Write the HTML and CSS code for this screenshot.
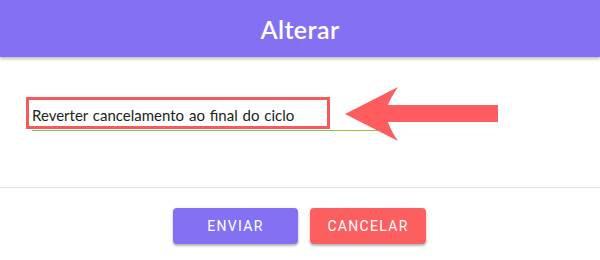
FILE: index.html
```html
<!DOCTYPE html>
<html lang="pt">
<head>
<meta charset="utf-8">
<link rel="stylesheet" href="styles.css">
</head>
<body>
<div class="dialog">
  <header class="header">Alterar</header>
  <section class="content">
    <div class="field">
      <div class="field-text">Reverter cancelamento ao final do ciclo</div>
    </div>
    <div class="highlight"></div>
    <svg class="arrow" viewBox="0 0 156 56" width="156" height="56">
      <path d="M1 28 L54 1 Q47 11 44 19 L154 19 L154 36 L44 36 Q47 45 54 55 Z" fill="#fe5c5e"/>
    </svg>
  </section>
  <footer class="actions">
    <button class="btn btn-send">ENVIAR</button>
    <button class="btn btn-cancel">CANCELAR</button>
  </footer>
</div>
</body>
</html>
```
FILE: styles.css
```css
html, body {
  margin: 0;
  padding: 0;
  background: #ffffff;
}
.dialog {
  width: 600px;
  height: 260px;
  font-family: Lato, "Noto Sans", sans-serif;
}
.header {
  height: 57px;
  background: #8470f2;
  color: #ffffff;
  display: flex;
  align-items: center;
  justify-content: center;
  font-size: 25px;
  font-weight: 600;
  letter-spacing: 0.4px;
  box-shadow: 0 2px 3px rgba(0,0,0,0.25);
  position: relative;
  z-index: 1;
}
.content {
  position: relative;
  height: 131px;
  border-bottom: 1px solid #e2e2e2;
  box-sizing: border-box;
  padding: 0 32px;
}
.field {
  width: 352px;
  padding-top: 44px;
  border-bottom: 1px solid #8bc34a;
}
.field-text {
  font-size: 15px;
  letter-spacing: 0;
  word-spacing: 1px;
  color: #222222;
  line-height: 28px;
  height: 29px;
  white-space: nowrap;
}
.highlight {
  position: absolute;
  left: 26px;
  top: 40px;
  width: 304px;
  height: 32px;
  box-sizing: border-box;
  border: 3px solid #f55a5e;
}
.arrow {
  position: absolute;
  left: 344px;
  top: 29px;
  display: block;
}
.actions {
  display: flex;
  justify-content: center;
  gap: 12px;
  padding-top: 20px;
  padding-right: 1px;
}
.btn {
  height: 36px;
  border: none;
  border-radius: 4px;
  color: #ffffff;
  font-family: Roboto, "Liberation Sans", sans-serif;
  font-size: 14px;
  font-weight: 400;
  letter-spacing: 1.3px;
  box-shadow: 0 2px 2px rgba(0,0,0,0.22), 0 1px 4px rgba(0,0,0,0.12);
  padding: 0;
}
.btn-send {
  width: 125px;
  background: #8470f2;
}
.btn-cancel {
  width: 116px;
  background: #fd5e5f;
}
```
